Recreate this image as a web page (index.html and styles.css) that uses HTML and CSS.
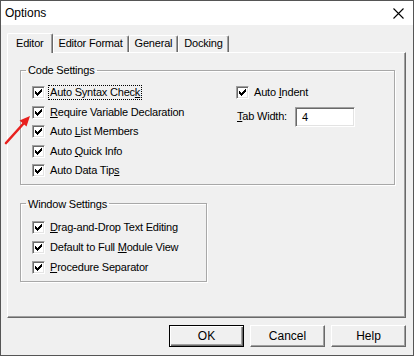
FILE: index.html
```html
<!DOCTYPE html>
<html lang="en">
<head>
  <meta charset="UTF-8">
  <title>Options</title>
  <link rel="stylesheet" href="styles.css">
</head>
<body>
<div class="window">
  <div class="titlebar">
    <span class="title">Options</span>
    <svg class="close" width="11" height="11" viewBox="0 0 11 11">
      <path d="M0.5 0.5L10.5 10.5M10.5 0.5L0.5 10.5" stroke="#000" stroke-width="1.1" fill="none"/>
    </svg>
  </div>
  <div class="content">
    <div class="tabs">
      <div class="tab active">Editor</div>
      <div class="tab">Editor Format</div>
      <div class="tab">General</div>
      <div class="tab">Docking</div>
    </div>
    <div class="panel">
      <fieldset class="group code">
        <legend>Code Settings</legend>
        <div class="cols">
          <div class="col left">
            <div class="row"><span class="cb"></span><span class="lbl focus">Auto Syntax Chec<u>k</u></span></div>
            <div class="row"><span class="cb"></span><span class="lbl"><u>R</u>equire Variable Declaration</span></div>
            <div class="row"><span class="cb"></span><span class="lbl">Auto <u>L</u>ist Members</span></div>
            <div class="row"><span class="cb"></span><span class="lbl">Auto <u>Q</u>uick Info</span></div>
            <div class="row"><span class="cb"></span><span class="lbl">Auto Data Tip<u>s</u></span></div>
          </div>
          <div class="col right">
            <div class="row"><span class="cb"></span><span class="lbl">Auto <u>I</u>ndent</span></div>
            <div class="tabwidth">
              <span class="lbl"><u>T</u>ab Width:</span>
              <span class="input">4</span>
            </div>
          </div>
        </div>
      </fieldset>
      <fieldset class="group win">
        <legend>Window Settings</legend>
        <div class="rows">
          <div class="row"><span class="cb"></span><span class="lbl"><u>D</u>rag-and-Drop Text Editing</span></div>
          <div class="row"><span class="cb"></span><span class="lbl">Default to Full <u>M</u>odule View</span></div>
          <div class="row"><span class="cb"></span><span class="lbl"><u>P</u>rocedure Separator</span></div>
        </div>
      </fieldset>
    </div>
    <div class="buttons">
      <span class="btn default">OK</span>
      <span class="btn">Cancel</span>
      <span class="btn">Help</span>
    </div>
  </div>
  <!-- red pointer drawn over the dialog -->
  <svg class="arrow" width="40" height="40" viewBox="0 0 40 40">
    <line x1="5" y1="33" x2="23" y2="13" stroke="#e8201e" stroke-width="2.6" stroke-linecap="round"/>
    <polygon points="29,6 25.5,16.5 18.5,10.5" fill="#e8201e"/>
  </svg>
</div>
<script>
  // put the classic check mark into every box
  var tick = '<svg width="7" height="7" viewBox="0 0 7 7"><path fill="#000" d="M6 0h1v1h-1zM5 1h2v1h-2zM0 2h1v1h-1zM4 2h3v1h-3zM0 3h2v1h-2zM3 3h3v1h-3zM0 4h5v1h-5zM1 5h3v1h-3zM2 6h1v1h-1z"/></svg>';
  var boxes = document.querySelectorAll(".cb");
  for (var i = 0; i < boxes.length; i++) {
    boxes[i].innerHTML = tick;
  }
</script>
</body>
</html>
```

FILE: styles.css
```css
* {
  margin: 0;
  padding: 0;
  box-sizing: border-box;
}

body {
  font-family: "Liberation Sans", Arial, sans-serif;
  font-size: 11px;
  color: #000;
  background: #fff;
}

.window {
  position: relative;
  width: 414px;
  height: 356px;
  border: 1px solid #555;
  background: #f0f0f0;
  display: flex;
  flex-direction: column;
}

.titlebar {
  height: 24px;
  background: #fff;
  display: flex;
  align-items: center;
  justify-content: space-between;
  padding: 0 9px 0 4px;
}

.title {
  font-size: 12px;
}

.close {
  display: block;
}

.content {
  flex: 1;
  padding: 8px 7px 0 6px;
  display: flex;
  flex-direction: column;
}

/* tabs */
.tabs {
  display: flex;
  align-items: flex-end;
  height: 20px;
  margin-bottom: -1px;
  position: relative;
  z-index: 1;
}

.tab {
  height: 17px;
  margin-bottom: 1px;
  padding: 0 5px 0 5px;
  line-height: 15px;
  border-top: 1px solid #fff;
  border-left: 1px solid #fff;
  border-right: 1px solid #696969;
  box-shadow: inset -1px 0 #a0a0a0;
  border-radius: 2px 2px 0 0;
  background: #f0f0f0;
  letter-spacing: -0.2px;
  text-align: center;
}

.tab.active {
  height: 20px;
  margin-bottom: 0;
  padding: 0 8px 0 8px;
  line-height: 18px;
}

/* page */
.panel {
  height: 266px;
  border: 1px solid;
  border-color: #fff #696969 #696969 #fff;
  box-shadow: inset -1px -1px #a0a0a0;
  padding: 10px 12px 0 12px;
}

.group {
  border: 1px solid #a8a8a8;
  box-shadow: 1px 1px #fff, inset 1px 1px #fff;
}

.group legend {
  margin-left: 5px;
  padding: 0 2px;
  line-height: 14px;
  letter-spacing: -0.2px;
}

.group.code {
  width: 375px;
}

.group.win {
  width: 187px;
  margin-top: 12px;
}

.cols {
  display: flex;
  padding: 6px 0 3px 11px;
}

.rows {
  padding: 7px 0 3px 11px;
}

.col.left {
  width: 204px;
}

.row {
  height: 19.5px;
  display: flex;
  align-items: center;
}

.rows .row {
  height: 20px;
}

.cb {
  width: 13px;
  height: 13px;
  flex: none;
  background: #fff;
  border: 1px solid;
  border-color: #a0a0a0 #fff #fff #a0a0a0;
  box-shadow: inset 1px 1px #696969, inset -1px -1px #e3e3e3;
  display: flex;
  align-items: center;
  justify-content: center;
  margin-right: 4px;
}

.cb svg {
  display: block;
}

.lbl {
  letter-spacing: -0.2px;
  padding: 0 1px;
  line-height: 13px;
  white-space: nowrap;
}

.lbl.focus {
  outline: 1px dotted #000;
}

u {
  text-underline-offset: 1px;
}

.tabwidth {
  display: flex;
  align-items: center;
  margin-top: 4px;
}

.input {
  width: 60px;
  height: 20px;
  margin-left: 7px;
  background: #fff;
  border: 1px solid;
  border-color: #a0a0a0 #fff #fff #a0a0a0;
  box-shadow: inset 1px 1px #696969, inset -1px -1px #e3e3e3;
  padding-left: 6px;
  line-height: 18px;
}

/* buttons */
.buttons {
  display: flex;
  justify-content: flex-end;
  gap: 6px;
  margin-top: 7px;
}

.btn {
  width: 75px;
  height: 22px;
  text-align: center;
  line-height: 20px;
  font-size: 12px;
  border: 1px solid;
  border-color: #fff #696969 #696969 #fff;
  box-shadow: inset -1px -1px #a0a0a0;
  background: #f0f0f0;
}

.btn.default {
  border-color: #000;
  box-shadow: inset 1px 1px #fff, inset -1px -1px #696969, inset -2px -2px #a0a0a0;
}

.arrow {
  position: absolute;
  left: 0;
  top: 109px;
}
```
